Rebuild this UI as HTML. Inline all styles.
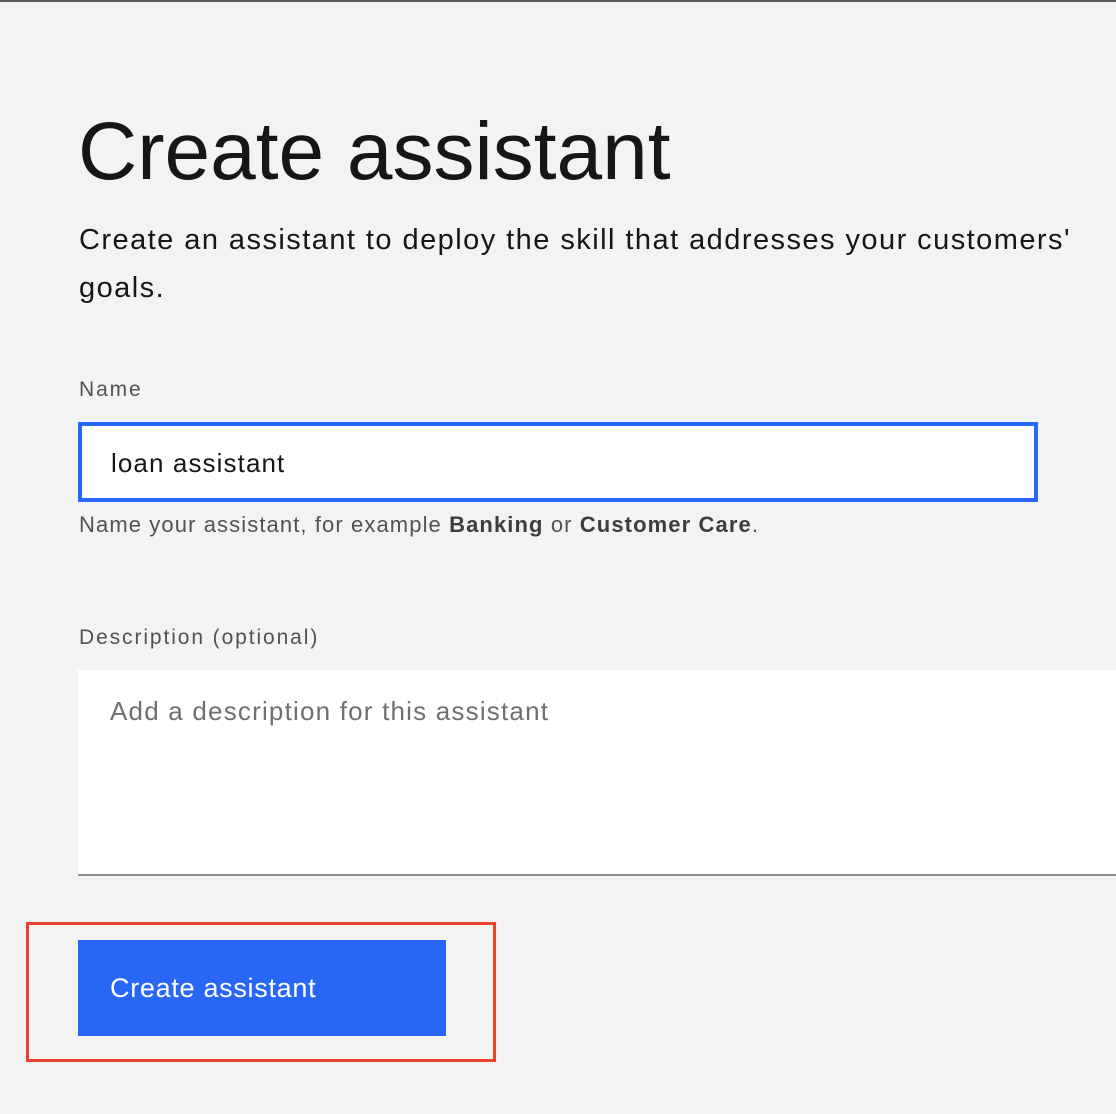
<!DOCTYPE html>
<html><head><meta charset="utf-8"><style>
html,body{margin:0;padding:0}
body{width:1116px;height:1114px;background:#f3f3f3;position:relative;overflow:hidden;font-family:"Liberation Sans",sans-serif;color:#161616}
.top{position:absolute;left:0;top:0;width:1116px;height:2px;background:#5a5a5a}
.abs{position:absolute;white-space:nowrap}
h1{position:absolute;left:78px;top:104px;margin:0;font-size:82px;font-weight:300;line-height:96px;letter-spacing:0}
.sub{left:79px;top:216px;font-size:29px;line-height:48px;color:#161616;letter-spacing:1.45px}
.lab{font-size:21px;color:#525252;letter-spacing:1.9px}
.inp{position:absolute;left:78px;top:422px;width:952px;height:72px;border:4px solid #2a66f5;background:#fff}
.inp span{position:absolute;left:29px;top:22px;font-size:26px;color:#161616;letter-spacing:1.1px}
.help{left:79px;top:512px;font-size:22px;color:#525252;letter-spacing:1.1px}
.help b{color:#3d3d3d}
.ta{position:absolute;left:78px;top:670px;width:1038px;height:204px;background:#fff;border-bottom:2px solid #8d8d8d}
.ta span{position:absolute;left:32px;top:26px;font-size:26px;color:#6f6f6f;letter-spacing:1.2px}
.red{position:absolute;left:26px;top:922px;width:464px;height:134px;border:3px solid #e8412c}
.btn{position:absolute;left:78px;top:940px;width:368px;height:96px;background:#2866f5}
.btn span{position:absolute;left:32px;top:33px;font-size:27px;color:#fff;letter-spacing:0.7px}
</style></head><body>
<div class="top"></div>
<h1>Create assistant</h1>
<div class="abs sub">Create an assistant to deploy the skill that addresses your customers'<br>goals.</div>
<div class="abs lab" style="left:79px;top:378px">Name</div>
<div class="inp"><span>loan assistant</span></div>
<div class="abs help">Name your assistant, for example <b>Banking</b> or <b>Customer Care</b>.</div>
<div class="abs lab" style="left:79px;top:626px">Description (optional)</div>
<div class="ta"><span>Add a description for this assistant</span></div>
<div class="red"></div>
<div class="btn"><span>Create assistant</span></div>
</body></html>
